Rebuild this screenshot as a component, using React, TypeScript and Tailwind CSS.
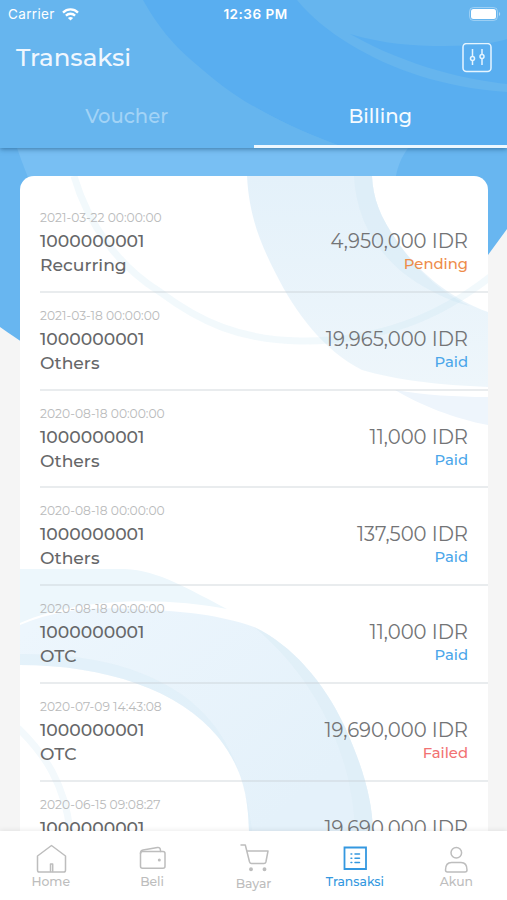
import React from "react";
import clsx from "clsx";

interface ITransaction {
	date: string;
	account: string;
	type?: string;
	amount: string;
	status?: "Pending" | "Paid" | "Failed";
}

const transactions: ITransaction[] = [
	{ date: "2021-03-22 00:00:00", account: "1000000001", type: "Recurring", amount: "4,950,000 IDR", status: "Pending" },
	{ date: "2021-03-18 00:00:00", account: "1000000001", type: "Others", amount: "19,965,000 IDR", status: "Paid" },
	{ date: "2020-08-18 00:00:00", account: "1000000001", type: "Others", amount: "11,000 IDR", status: "Paid" },
	{ date: "2020-08-18 00:00:00", account: "1000000001", type: "Others", amount: "137,500 IDR", status: "Paid" },
	{ date: "2020-08-18 00:00:00", account: "1000000001", type: "OTC", amount: "11,000 IDR", status: "Paid" },
	{ date: "2020-07-09 14:43:08", account: "1000000001", type: "OTC", amount: "19,690,000 IDR", status: "Failed" },
	{ date: "2020-06-15 09:08:27", account: "1000000001", amount: "19,690,000 IDR" },
];

const statusClass = {
	Pending: "text-[#ee8c4a]",
	Paid: "text-[#4ba6ea]",
	Failed: "text-[#f27272]",
};

function StatusBar() {
	return (
		<div className="relative flex h-7 items-center justify-between pl-2 pr-[6px] font-[Inter,sans-serif] text-white">
			<div className="flex flex-1 items-center gap-[7px]">
				<span className="text-[13.5px] tracking-[0.35px]">Carrier</span>
				<svg width="17" height="13" viewBox="0 0 17 13" fill="none" stroke="white" strokeWidth="2.3">
					<path d="M1 4.6C5.2.4 11.8.4 16 4.6" />
					<path d="M3.9 7.6c2.6-2.5 6.6-2.5 9.2 0" />
					<path d="M8.5 12.6 5.9 9.9c1.5-1.3 3.7-1.3 5.2 0z" fill="white" stroke="none" />
				</svg>
			</div>
			<span className="pl-[2px] text-[13.5px] font-semibold tracking-[0.5px]">12:36 PM</span>
			<div className="flex flex-1 justify-end">
				<svg width="32" height="15" viewBox="0 0 32 15" fill="none">
					<rect x="0.5" y="0.5" width="28" height="13" rx="4" stroke="white" strokeOpacity="0.35" />
					<rect x="2" y="2" width="25" height="10" rx="2.5" fill="white" />
					<path d="M30 5c1.6.6 1.6 3.4 0 4z" fill="white" fillOpacity="0.5" />
				</svg>
			</div>
		</div>
	);
}

function Header() {
	return (
		<header className="relative z-10 h-[148px] w-full shrink-0 bg-[#66b5ee] shadow-[0_1px_5px_rgba(20,70,110,0.6)]">
			<svg className="absolute inset-0" width="507" height="148" viewBox="0 0 507 148" fill="#59aef0">
				<path d="M143 0C158 27 174 45 190 59C214 80 232 94 253 106C282 123 312 136 346 148H507V92C475 90 446 84 420 76C370 60 323 32 297 0Z" />
				<path d="M350 34C385 44 410 46 445 46C475 46 495 43 507 39V84C470 80 410 68 350 34Z" />
				<path d="M253 106C282 123 312 136 346 148H253Z" fill="#66b5ee" />
			</svg>
			<StatusBar />
			<div className="relative flex h-[60px] items-center justify-between pl-4 pr-[15px]">
				<h1 className="pb-[2px] text-[24.5px] font-medium text-[#f0f7fe]">Transaksi</h1>
				<svg width="30" height="30" viewBox="0 0 30 30" fill="none" stroke="#e6f5ff" strokeWidth="1.5">
					<rect x="1" y="0.5" width="28" height="28" rx="3.5" />
					<path d="M10.5 6v7.2M10.5 17.500v4.500M20 6v5.500M20 15.800v6.200" />
					<circle cx="10.5" cy="15.400" r="2" />
					<circle cx="20" cy="13.600" r="2" />
				</svg>
			</div>
			<div className="relative flex h-[60px] text-[19.6px] font-medium">
				<button className="flex-1 pb-[3px] text-[#a2d3f6]">Voucher</button>
				<button className="flex-1 border-b-[3px] border-[#eef8ff] text-[#f5fbff]">Billing</button>
			</div>
		</header>
	);
}

function PageBackdrop() {
	return (
		<svg className="absolute left-0 top-0" width="507" height="470" viewBox="0 0 507 470">
			<path d="M0 148H507V229L488 255C440 330 360 430 240 430C150 430 80 382 0 327Z" fill="#68b6f0" />
			<path d="M17 148H408C401 158 398 166 396 176V300H100C60 250 35 200 17 148Z" fill="#78bff3" />
		</svg>
	);
}

function CardPattern() {
	return (
		<svg className="absolute inset-0" width="468" height="655" viewBox="20 176 468 655" fill="none">
			<defs>
				<linearGradient id="topBand" x1="0" y1="176" x2="0" y2="387" gradientUnits="userSpaceOnUse">
					<stop stopColor="#e4f1fa" />
					<stop offset="1" stopColor="#eef6fb" />
				</linearGradient>
				<linearGradient id="bottomBand" x1="60" y1="600" x2="260" y2="831" gradientUnits="userSpaceOnUse">
					<stop stopColor="#edf6fd" />
					<stop offset="1" stopColor="#e4f1fa" />
				</linearGradient>
			</defs>
			<path d="M247 176C249 215 260 243 276 274C295 312 323 350 362 370C395 380 440 385 488 387V312C448 298 415 268 397 241C380 217 373 198 372 176Z" fill="url(#topBand)" />
			<path d="M354 176C356 215 372 246 402 272C420 286 445 300 470 306C440 293 413 266 397 241C380 217 373 198 372 176Z" fill="#dcecf6" fillOpacity="0.7" />
			<path d="M74 176C88 224 118 266 160 292C200 322 240 340 300 341C380 342 440 316 490 277" stroke="#bfe0ee" strokeOpacity="0.2" strokeWidth="7" />
			<path d="M395 390C425 395 455 397 488 397V425C455 419 420 405 395 390Z" fill="#eef5fc" />
			<path d="M20 569H125C158 570 190 590 227 609C165 597 80 597 20 623Z" fill="#edf7fc" />
			<path d="M20 625C60 608 98 607 134 609C185 611 220 615 254 627C292 645 324 682 345 727C363 768 372 798 373 831H249C248 790 240 765 218 737C180 690 105 665 20 665Z" fill="url(#bottomBand)" />
			<path d="M20 654C90 654 140 666 184 696C214 719 242 752 252 831H249C248 790 240 765 218 737C180 690 105 665 20 665Z" fill="#dceef8" fillOpacity="0.5" />
			<path d="M254 627C292 645 324 682 345 727C363 768 372 798 373 831H355C353 758 318 680 254 627Z" fill="#deeef6" fillOpacity="0.7" />
			<path d="M18 728C45 754 65 785 70 831" stroke="#f3f9fc" strokeWidth="7" />
		</svg>
	);
}

function TransactionRow({ item }: { item: ITransaction }) {
	return (
		<div className="ml-5 flex h-[97.75px] shrink-0 justify-between border-b-2 border-[#c8d0d4]/40 pr-5">
			<div className="pt-[15px] text-[#666769]">
				<div className="h-4 text-[12.25px] leading-4 text-[#b9babb]">{item.date}</div>
				<div className="mt-[3px] text-[17.2px] font-medium leading-[24px]">{item.account}</div>
				{item.type && <div className="text-[17.2px] font-medium leading-[24px]">{item.type}</div>}
			</div>
			<div className="pt-[34px] text-right">
				<div className="text-[19.6px] leading-6 text-[#737476]">{item.amount}</div>
				{item.status && (
					<div className={clsx("text-[14.8px] font-medium leading-[22px]", statusClass[item.status])}>{item.status}</div>
				)}
			</div>
		</div>
	);
}

function NavItem({ label, className, children }: { label: string; className: string; children: React.ReactNode }) {
	return (
		<a className={clsx("flex flex-1 flex-col items-center text-[12.4px] font-medium leading-4", className)}>
			<svg width="34" height="34" viewBox="0 0 34 34" fill="none" stroke="currentColor" strokeWidth="1.5" strokeLinejoin="round" strokeLinecap="round">
				{children}
			</svg>
			<span>{label}</span>
		</a>
	);
}

function BottomNav() {
	return (
		<nav className="relative z-10 flex h-[69px] shrink-0 bg-white pt-[9px] shadow-[0_-1px_5px_rgba(0,0,0,0.08)]">
			<NavItem label="Home" className="text-[#bdbdbd]">
				<path d="M3.5 16 17.500 5.500l14 10.500v14.200c0 1-.8 1.800-1.800 1.800H5.300c-1 0-1.800-.8-1.800-1.800z" />
				<path d="M16.500 31.500v-7.500h2.200v7.500" />
			</NavItem>
			<NavItem label="Beli" className="text-[#bdbdbd]">
				<path d="M5.500 13.500c0-2 .7-3.200 2.500-3.500l14.500-2.500c1.600-.3 2.600.4 2.800 1.800l.3 2.200" />
				<path d="M5.500 13.500c0-1.200.9-2 2-2h20.500c1.200 0 2 .8 2 2v12.700c0 1.200-.8 2-2 2h-20.500c-1.200 0-2-.8-2-2z" />
				<circle cx="24.300" cy="20" r="1.500" fill="currentColor" stroke="none" />
			</NavItem>
			<NavItem label="Bayar" className="pt-[2px] text-[#bdbdbd]">
				<path d="M4 3h4.300l4.200 16.800c.3 1 1 1.700 2 1.700h12.500c1 0 1.600-.5 1.900-1.500l2.100-11H9.700" />
				<circle cx="14" cy="27.300" r="1.200" fill="currentColor" />
				<circle cx="27.500" cy="27.300" r="1.200" fill="currentColor" />
			</NavItem>
			<NavItem label="Transaksi" className="text-[#3498e0]">
				<path d="M6.500 7.500h21.500v21.500h-21.500z" strokeWidth="1.800" strokeLinejoin="miter" />
				<path d="M13 14h.8M13 18.300h.8M13 22.500h.8M17 14h4.500M17 18.300h4.500M17 22.500h4.500" />
			</NavItem>
			<NavItem label="Akun" className="text-[#bdbdbd]">
				<circle cx="17.300" cy="12.800" r="5.300" />
				<path d="M6.500 30c0-4.800 2.200-7.500 6-7.500h9.500c3.800 0 6 2.700 6 7.500 0 1.300-.6 2-2 2h-17.500c-1.400 0-2-.7-2-2z" />
			</NavItem>
		</nav>
	);
}

export default function App() {
	return (
		<div className="relative flex h-[900px] w-[507px] flex-col overflow-hidden bg-[#f5f5f5] font-['Montserrat','Inter',sans-serif]">
			<PageBackdrop />
			<Header />
			<main className="relative min-h-0 flex-1 pl-5 pr-[19px] pt-7">
				<div className="relative h-full overflow-hidden rounded-t-[14px] bg-white">
					<CardPattern />
					<div className="relative flex flex-col pt-[19px]">
						{transactions.map((item, i) => (
							<TransactionRow key={i} item={item} />
						))}
					</div>
				</div>
			</main>
			<BottomNav />
		</div>
	);
}
